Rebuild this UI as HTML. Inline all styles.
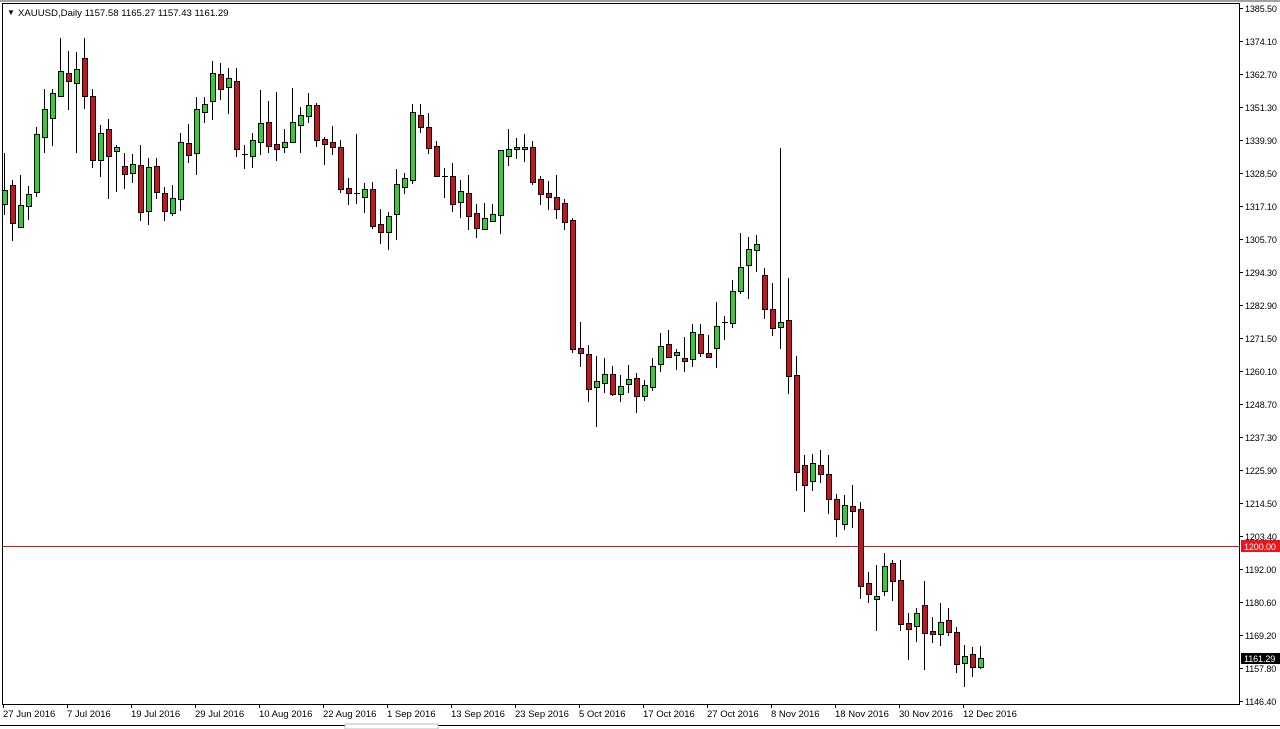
<!DOCTYPE html>
<html><head><meta charset="utf-8"><style>
html,body{margin:0;padding:0;background:#fff;width:1280px;height:729px;overflow:hidden}
svg{display:block}
text{font-family:"Liberation Sans",sans-serif;font-size:10px;fill:#000}
.p{font-size:9px;letter-spacing:-0.1px}
.dt{font-size:9.5px}
</style></head><body>
<svg id="s" width="1280" height="729" xmlns="http://www.w3.org/2000/svg">
<rect x="0" y="0" width="1280" height="2" fill="#a0a0a0"/>
<rect x="2.5" y="3.5" width="1237" height="701" fill="#fff" stroke="#000"/>
<line x1="3" y1="546.5" x2="1240" y2="546.5" stroke="#d4141e" stroke-width="1"/>
<g id="c"></g>
<text x="7" y="15" style="font-size:8px">▼</text>
<text x="18" y="16" style="font-size:9.6px">XAUUSD,Daily  1157.58 1165.27 1157.43 1161.29</text>
<g id="pa"></g>
<rect x="1241" y="540" width="39" height="12" fill="#e8141e"/>
<text class="p" x="1244" y="550" style="fill:#fff">1200.00</text>
<rect x="1241" y="653" width="39" height="11" fill="#000"/>
<text class="p" x="1244" y="662" style="fill:#fff">1161.29</text>
<g id="da"></g>
<rect x="0" y="725" width="1280" height="1" fill="#000"/>
<rect x="345" y="724" width="93" height="5" fill="#fff" stroke="#bbb"/>
</svg>
<script>
var N="http://www.w3.org/2000/svg";
function el(t,a,p,txt){var e=document.createElementNS(N,t);for(var k in a)e.setAttribute(k,a[k]);if(txt)e.textContent=txt;p.appendChild(e);return e;}
var d=[
[153,190,204,215,'g'],[180,185,223,241,'r'],[175,205,227,227,'g'],[186,194,206,220,'g'],[127,134,192,197,'g'],
[89,109,137,153,'g'],[89,93,118,146,'g'],[38,71,96,96,'g'],[51,73,81,110,'r'],[52,69,83,153,'g'],
[38,58,96,109,'r'],[89,96,160,168,'r'],[125,133,160,177,'g'],[119,129,156,199,'r'],[145,147,151,192,'g'],
[153,166,174,189,'r'],[154,164,173,183,'g'],[145,165,212,221,'r'],[158,167,211,225,'g'],[158,166,192,199,'r'],
[187,193,211,221,'r'],[185,198,213,216,'g'],[133,142,199,211,'g'],[124,143,155,163,'r'],[97,109,153,175,'g'],
[97,104,112,123,'g'],[61,73,101,120,'g'],[63,74,89,100,'r'],[68,78,87,114,'g'],[68,81,149,157,'r'],
[145,154,154,169,'g'],[133,140,156,168,'g'],[90,123,142,155,'g'],[101,122,146,153,'r'],[92,144,149,161,'r'],
[129,142,147,153,'g'],[88,122,142,143,'g'],[107,115,125,153,'g'],[93,105,116,123,'g'],[103,105,140,147,'r'],
[137,139,144,165,'r'],[126,142,147,155,'r'],[140,147,189,193,'r'],[178,188,193,205,'r'],[134,193,193,204,'r'],
[183,189,197,213,'g'],[182,189,226,229,'r'],[209,224,232,244,'r'],[212,216,232,250,'g'],[169,184,214,240,'g'],
[173,178,187,194,'g'],[104,112,180,184,'g'],[104,115,127,133,'r'],[113,127,148,154,'r'],[141,146,176,177,'r'],
[168,176,176,198,'r'],[163,176,204,212,'r'],[180,191,202,218,'g'],[175,193,216,230,'r'],[204,213,228,238,'r'],
[203,218,229,230,'g'],[204,214,221,222,'g'],[150,150,215,234,'g'],[129,149,156,166,'g'],[138,147,149,159,'g'],
[134,147,149,162,'g'],[141,147,182,185,'r'],[176,179,194,205,'r'],[181,193,197,210,'r'],[175,197,209,219,'r'],
[199,203,222,230,'r'],[218,220,349,353,'r'],[322,348,353,367,'r'],[345,354,389,402,'r'],[356,381,387,427,'g'],
[358,374,383,393,'g'],[366,374,394,396,'r'],[375,386,394,402,'g'],[365,379,384,393,'g'],[373,378,396,413,'r'],
[380,385,396,401,'g'],[358,366,387,391,'g'],[333,346,364,372,'g'],[330,344,357,358,'r'],[349,352,355,370,'g'],
[337,358,361,372,'r'],[324,332,359,367,'g'],[324,334,353,357,'r'],[335,353,357,358,'r'],[302,326,348,368,'g'],
[316,322,322,340,'g'],[280,291,323,328,'g'],[233,267,291,294,'g'],[237,249,265,299,'g'],[235,244,250,272,'g'],
[268,275,309,319,'r'],[283,309,328,336,'r'],[148,322,327,349,'g'],[278,320,376,394,'r'],[356,375,472,491,'r'],
[455,465,485,512,'r'],[454,463,481,491,'g'],[450,465,474,483,'r'],[455,474,499,514,'r'],[494,499,519,537,'r'],
[495,505,524,530,'g'],[485,506,511,528,'r'],[502,509,586,599,'r'],[572,583,594,603,'r'],[565,596,599,631,'g'],
[553,566,591,596,'g'],[560,563,581,601,'r'],[560,580,624,631,'r'],[613,623,629,660,'r'],[608,613,626,642,'g'],
[581,605,633,670,'r'],[617,631,634,643,'r'],[603,622,634,646,'g'],[608,620,632,636,'r'],[627,632,664,673,'r'],
[645,656,663,687,'g'],[647,654,667,677,'r'],[646,658,667,669,'g']];
var g=document.getElementById('c');
d.forEach(function(c,i){var x=Math.round(3.5+8*i)+0.5;
el('line',{x1:x,y1:c[0],x2:x,y2:c[3],stroke:'#000','stroke-width':1},g);
var h=Math.max(c[2]-c[1],1);
if(c[2]-c[1]<1){el('line',{x1:x-2.5,y1:c[1]+.5,x2:x+3.5,y2:c[1]+.5,stroke:'#000'},g);}
else el('rect',{x:x-2,y:c[1]+.5,width:5,height:h,fill:c[4]=='g'?'#32cd32':'#c8141e',stroke:'#000','stroke-width':1},g);});
var pa=document.getElementById('pa');
var L=["1385.50","1374.10","1362.70","1351.30","1339.90","1328.50","1317.10","1305.70","1294.30","1282.90","1271.50","1260.10","1248.70","1237.30","1225.90","1214.50","1203.40","1192.00","1180.60","1169.20","1157.80","1146.40"];
L.forEach(function(t,i){var y=8+33*i;if(i==16)y=536;if(i>=17)y=569+33*(i-17);if(i==20)y=668;if(i==21)y=701;
el('line',{x1:1240,y1:y+.5,x2:1243,y2:y+.5,stroke:'#000'},pa);
el('text',{x:1245,y:y+4,'class':'p'},pa,t);});
var da=document.getElementById('da');
var D=["27 Jun 2016","7 Jul 2016","19 Jul 2016","29 Jul 2016","10 Aug 2016","22 Aug 2016","1 Sep 2016","13 Sep 2016","23 Sep 2016","5 Oct 2016","17 Oct 2016","27 Oct 2016","8 Nov 2016","18 Nov 2016","30 Nov 2016","12 Dec 2016"];
D.forEach(function(t,i){var x=3+64*i;
el('line',{x1:x+.5,y1:704,x2:x+.5,y2:708,stroke:'#000'},da);
el('text',{x:x,y:717,'class':'dt'},da,t);});
</script>
</body></html>
